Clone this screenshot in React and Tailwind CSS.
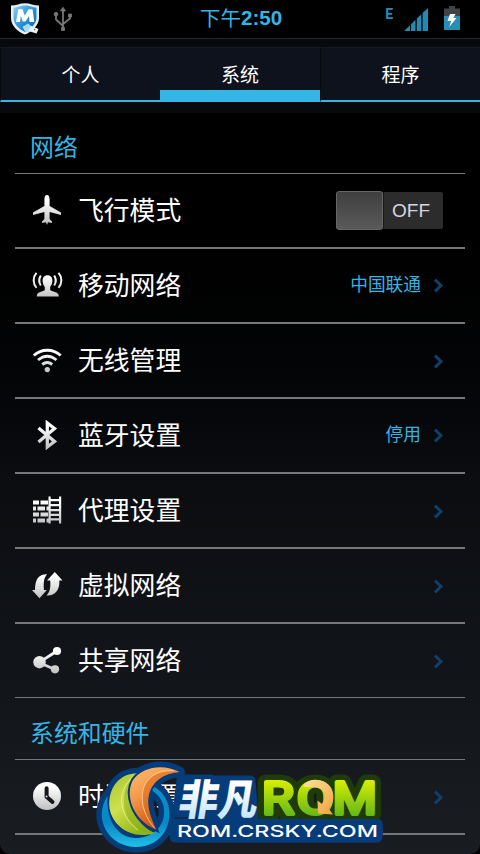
import React, { useState } from "react";

// ------------------- DATA -------------------
const tabs = ["个人", "系统", "程序"];

const networkItems = [
  { id: "airplane", label: "飞行模式", toggle: true },
  { id: "mobile", label: "移动网络", value: "中国联通" },
  { id: "wifi", label: "无线管理" },
  { id: "bluetooth", label: "蓝牙设置", value: "停用" },
  { id: "proxy", label: "代理设置" },
  { id: "vpn", label: "虚拟网络" },
  { id: "share", label: "共享网络" },
];

// ------------------- ROW ICONS -------------------
const shapes = {
  airplane: (
    <path d="M16 0C17.8 0 18.6 2 18.6 4.5V11L30 17.6V20L18.6 17V24L21 26.5V28L17 27.2L16 30L15 27.2L11 28V26.5L13.4 24V17L2 20V17.6L13.4 11V4.5C13.4 2 14.2 0 16 0Z" />
  ),
  mobile: (
    <>
      <path d="M16.5 5.3C19.8 5.3 21.4 7.6 21.4 10.6C21.4 13.6 20.2 15.8 19.2 17V20.2C22 21.6 27.8 22 27.8 26V26.6H5.8V26C5.8 22 11 21.6 13.8 20.2V17C12.8 15.8 11.6 13.6 11.6 10.6C11.6 7.6 13.2 5.3 16.5 5.3Z" />
      <path
        d="M9.8 5.5C7.9 8.5 7.9 12.5 9.8 15.5M5.5 2.8C1.7 7 1.7 13.5 5.5 17.8M23.2 5.5C25.1 8.5 25.1 12.5 23.2 15.5M27.5 2.8C31.3 7 31.3 13.5 27.5 17.8"
        fill="none"
        stroke="url(#silver)"
        strokeWidth="2"
      />
    </>
  ),
  wifi: (
    <>
      <path
        d="M2.8 10.5C10.5 3.5 22 3.5 29.7 10.5M7 15C13 10 19.5 10 25.5 15M11.2 19.5C14.5 17 18 17 21.2 19.5"
        fill="none"
        stroke="url(#silver)"
        strokeWidth="2.9"
      />
      <circle cx="16.3" cy="24.6" r="2.6" />
    </>
  ),
  bluetooth: (
    <path
      d="M7.5 8L23.5 21.5L16.3 27V3L23.5 8.5L7.5 22"
      fill="none"
      stroke="url(#silver)"
      strokeWidth="3.3"
    />
  ),
  proxy: (
    <path d="M2 5.5H8V9.5H2ZM9.5 5.5H17V9.5H9.5ZM2 11.5H5V15.5H2ZM6.5 11.5H14V15.5H6.5ZM15.5 11.5H18V15.5H15.5ZM2 17.5H8V21.5H2ZM9.5 17.5H17V21.5H9.5ZM2 23.5H5V27.5H2ZM6.5 23.5H14V27.5H6.5ZM15.5 23.5H18V27.5H15.5ZM17.5 1.5H19.7V4H28V1.5H30.2V28.5H28V25.5H19.7V28.5H17.5ZM19.7 6.3V9H28V6.3ZM19.7 11.3V14H28V11.3ZM19.7 16.3V18.7H28V16.3ZM19.7 21V23.3H28V21Z" />
  ),
  vpn: (
    <>
      <path d="M16 4.3C8 4 4 9 4 20H1L8.5 28.3L15.8 20H13C12.3 12 13 8 16 4.3Z" />
      <path d="M15.5 25.5C19 22 19.8 17 19.2 10.5H16L23.8 2L31.5 10.5H28.3C29 19.5 24.5 26 15.5 25.5Z" />
    </>
  ),
  share: (
    <>
      <path
        d="M26 6L8 17.5L24 24.5"
        fill="none"
        stroke="url(#silver)"
        strokeWidth="2.8"
      />
      <circle cx="26" cy="6" r="4.1" />
      <circle cx="8.5" cy="17.2" r="6.2" />
      <circle cx="24" cy="24.3" r="4.1" />
    </>
  ),
  clock: (
    <>
      <circle cx="16" cy="15" r="14" />
      <path
        d="M15.6 7.2V15.8L21.5 21"
        fill="none"
        stroke="#14171b"
        strokeWidth="4"
        strokeLinecap="round"
      />
      <circle cx="15.6" cy="15.5" r="1" fill="#ccc" />
    </>
  ),
};

const RowIcon = ({ name }) => (
  <svg className="-mt-[2px] h-[30px] w-8 shrink-0" viewBox="0 0 32 30" fill="url(#silver)">
    <defs>
      <linearGradient
        id="silver"
        gradientUnits="userSpaceOnUse"
        x1="0"
        y1="0"
        x2="0"
        y2="30"
      >
        <stop offset="0.2" stopColor="#fff" />
        <stop offset="1" stopColor="#bcbcbc" />
      </linearGradient>
    </defs>
    {shapes[name]}
  </svg>
);

const Chevron = () => (
  <svg className="mt-px ml-3 h-[15px] w-[11px]" viewBox="0 0 11 15">
    <path
      d="M2 1.6L8 7.5L2 13.4"
      fill="none"
      stroke="#103f68"
      strokeWidth="3"
    />
  </svg>
);

// ------------------- STATUS BAR -------------------
const StatusBar = () => (
  <header className="flex h-[39px] justify-between border-b border-[#24282d] bg-black">
    <div className="flex w-[160px] pl-[10px]">
      <svg className="h-9 w-[30px]" viewBox="0 0 30 36">
        <defs>
          <linearGradient id="shield" x1="0" y1="0" x2="1" y2="1">
            <stop stopColor="#8fd0ef" />
            <stop offset="0.45" stopColor="#2d9bdc" />
            <stop offset="1" stopColor="#075da8" />
          </linearGradient>
        </defs>
        <path
          d="M1 5.5C6 5.5 10 3.2 15 3.2S24 5.5 29 5.5V18C29 26 21 32 15 34.5C8 32 1 26 1 18Z"
          fill="#e8eef2"
        />
        <path
          d="M3.5 7.5C8 7.5 10 5.5 15 5.5S22 7.5 26.5 7.5V18C26.5 24 20 29 15 32C9 29 3.5 24 3.5 18Z"
          fill="url(#shield)"
        />
        <path
          d="M6 22L8.3 9.2H12.5L14.8 15.5L18.5 9.2H22.5L24.3 22H19.5L19 16L15.5 21.5H12.7L10.8 16L10 22Z"
          fill="#fff"
        />
        <path d="M12.5 27L18 23.5L23 27.5L19 32L15 31.5Z" fill="#a9dcf3" />
        <path d="M21 26L28.5 29L26.5 33.5L18.5 31Z" fill="#eef3f5" />
        <path d="M24 29H25.3V30.3H24Z" fill="#567184" />
      </svg>
      <svg
        className="mt-[6px] ml-[13px] h-[26px] w-5"
        viewBox="0 0 20 26"
        fill="#777"
        stroke="#777"
      >
        <path d="M10 24V3M10 20L3 13.5V8M10 18L17 12.5V9" fill="none" strokeWidth="1.8" />
        <path d="M10 1.2L12.5 5H7.5ZM8.5 21.5H11.5V24.5H8.5ZM15.5 8H18.5V11H15.5Z" strokeWidth="0.8" />
        <circle cx="3" cy="8.2" r="1.8" />
      </svg>
    </div>
    <div className="flex h-[37px] w-[162px] items-center justify-center text-[20.6px] leading-none font-bold text-[#33b5e5]">
      <span className="pt-px font-normal">下午</span>
      <span>2:50</span>
    </div>
    <div className="flex w-[158px] justify-end pr-5">
      <span className="mt-[7px] font-['Roboto',sans-serif] text-[14px] leading-[14px] font-bold text-[#238eb7]">
        E
      </span>
      <svg className="mt-2 ml-[11px] h-[23px] w-6" viewBox="0 0 24 23">
        <path
          d="M0 23L6 17.2V23ZM7 16.2L11.5 11.8V23H7ZM12.8 10.6L17.3 6.2V23H12.8ZM18.6 5L24 0V23H18.6Z"
          fill="#2489b2"
        />
      </svg>
      <svg className="mt-[6px] ml-4 h-6 w-4" viewBox="0 0 16 24">
        <path d="M5 0H11V2.5H16V24H0V2.5H5Z" fill="#3f4347" />
        <path d="M0 10H16V24H0Z" fill="#278eb4" />
        <path d="M6 8H11.5L9.3 12H12.5L5.2 21L7.3 15H3.5Z" fill="#fff" />
      </svg>
    </div>
  </header>
);

// ------------------- TABS -------------------
const TabBar = ({ active, onChange }) => (
  <div className="flex h-[74px] bg-[#07090d] pt-2 pb-[11px]">
    {tabs.map((tab, i) => (
      <button
        key={tab}
        onClick={() => onChange(i)}
        className={`flex h-[55px] w-40 items-center justify-center border-t border-t-[#181a1e] bg-[#0e121d] text-[19px] text-white ${
          active === i
            ? "border-b-[12px] border-b-[#33b5e5] pt-[15px]"
            : "border-b-2 border-l border-b-[#33b5e5] border-l-[#07090d] pt-[5px]"
        }`}
      >
        {tab}
      </button>
    ))}
  </div>
);

const SectionTitle = ({ children, className }) => (
  <h2
    className={`flex items-center border-b border-[#77777a] pl-[15px] text-[23.9px] leading-none text-[#33b5e5] ${className}`}
  >
    {children}
  </h2>
);

const SettingRow = ({ icon, label, value, toggle, className = "h-[75px] border-b-2" }) => (
  <li className={`flex items-center border-[#77777a] pr-[21px] pl-4 ${className}`}>
    <RowIcon name={icon} />
    <span className="ml-[15px] pt-[2px] text-[25.8px] leading-none whitespace-nowrap text-white">
      {label}
    </span>
    {toggle ? (
      <div className="mr-px ml-auto flex h-[37px] w-[107px] items-center rounded-[2px] bg-[#2c2c2d]">
        <div className="h-[39px] w-[47px] rounded-[3px] border border-[#666] bg-linear-to-b from-[#3f3f3f] to-[#5a5a5a]" />
        <div className="h-full w-px bg-[#171717]" />
        <span className="ml-[8px] pt-px text-[19px] text-[#d8d5e2]">OFF</span>
      </div>
    ) : (
      <div className="ml-auto flex items-center text-[17.7px] leading-none text-[#33b5e5]">
        {value}
        <Chevron />
      </div>
    )}
  </li>
);

// ------------------- SITE LOGO -------------------
const ringPath =
  "M107.5 796C92 820 110 847 136 847C161 847 174 825 168 804C165 795 159 789 153 786.5L151 790C160 795 165 804 164 814C163 829 150 838 136 838C118 838 106 821 107.5 796Z";
const leafPath =
  "M138.3 773.3C119 773 108.5 788 109.3 806C110.5 824 130 841 155 833C142 828 131 813 129 797C128 787 131.5 779 138.3 773.3Z";
const flamePath =
  "M179.5 772C163 763 142 767 133 780C125 794 132 820 156 829.5C151 818 146 806 149 794C152 782 163 773 179.5 772Z";

// letters are shared by the dark backing and the bright face
const RomLetters = () => (
  <>
    <text x="262" y="813.8" textLength="32" lengthAdjust="spacingAndGlyphs">R</text>
    <text x="296.8" y="813.8" textLength="37" lengthAdjust="spacingAndGlyphs">O</text>
    <text x="332.8" y="813.8" textLength="44" lengthAdjust="spacingAndGlyphs">M</text>
  </>
);

const SiteLogo = () => (
  <svg
    className="pointer-events-none absolute top-[755px] left-[90px] h-[99px] w-[300px]"
    viewBox="90 755 300 99"
  >
    <defs>
      <linearGradient id="leaf" x1="0" y1="0" x2="0.6" y2="1">
        <stop stopColor="#a5c52c" />
        <stop offset="0.5" stopColor="#cfe04e" />
        <stop offset="1" stopColor="#8fb516" />
      </linearGradient>
      <linearGradient id="flame" x1="0" y1="0" x2="0.5" y2="1">
        <stop stopColor="#ffbd6e" />
        <stop offset="0.45" stopColor="#f4994b" />
        <stop offset="1" stopColor="#cb4c0c" />
      </linearGradient>
      <linearGradient id="ring" x1="0" y1="0" x2="0" y2="1">
        <stop stopColor="#0791cf" />
        <stop offset="0.6" stopColor="#0a86c6" />
        <stop offset="1" stopColor="#1fc0e6" />
      </linearGradient>
      <linearGradient id="ice" x1="0" y1="0" x2="0" y2="1">
        <stop offset="0.3" stopColor="#fff" />
        <stop offset="1" stopColor="#b6dff7" />
      </linearGradient>
      <linearGradient id="lime" gradientUnits="userSpaceOnUse" x1="0" y1="780" x2="0" y2="817">
        <stop stopColor="#d9ef00" />
        <stop offset="1" stopColor="#5fb51c" />
      </linearGradient>
      <linearGradient id="amber" x1="0" y1="0" x2="1" y2="1">
        <stop stopColor="#ffe3a0" />
        <stop offset="1" stopColor="#f2a13a" />
      </linearGradient>
    </defs>

    {/* dark backings */}
    <g fill="#063c79" stroke="#063c79" strokeWidth="11" strokeLinejoin="round">
      <path d={ringPath} />
      <path d={leafPath} />
      <path d={flamePath} />
      <path d="M128 776C114 779 106 790 105 802L118 832L136 842L153 833L140 790Z" stroke="none" />
      <path d="M182 780H211V812H178ZM211 781H250L253 816H206Z" />
      <path d="M175 824H377V837H175Z" />
    </g>
    <g
      fontFamily="Roboto, sans-serif"
      fontSize="45"
      fill="#1e3b08"
      stroke="#1e3b08"
      strokeWidth="15"
      strokeLinejoin="round"
    >
      <RomLetters />
    </g>
    <path
      d="M171 819H373Q383 819 383 829V834Q382 842.5 373 842.5H178Q170 842 170 834Z"
      fill="#063c79"
    />

    {/* round emblem */}
    <path d={ringPath} fill="url(#ring)" />
    <path d={leafPath} fill="url(#leaf)" />
    <path
      d="M134 776C122 788 119 812 135 827C140 831 147 833 155 833C142 828 131 813 129 797C128 787 130 781 134 776Z"
      fill="#88ac19"
      opacity="0.5"
    />
    <path
      d="M133 777C117 790 117 814 138 830"
      fill="none"
      stroke="#e7f39a"
      strokeWidth="0.8"
    />
    <path d={flamePath} fill="#063c79" stroke="#063c79" strokeWidth="4" />
    <path d={flamePath} fill="url(#flame)" />
    <path
      d="M179.5 772C160 768 146 778 143 790C140 804 146 819 156 829.5C151 818 146 806 149 794C152 782 163 773 179.5 772Z"
      fill="#d9661a"
      opacity="0.55"
    />
    <path
      d="M174 771C157 769 146 778 143 790C140 804 146 819 155 828.5"
      fill="none"
      stroke="#ffd4a0"
      strokeWidth="0.8"
    />

    {/* wordmarks */}
    <text
      transform="translate(177 815) skewX(-9)"
      fontFamily="'Noto Sans CJK SC', sans-serif"
      fontSize="42"
      fontWeight="900"
      textLength="79"
      lengthAdjust="spacingAndGlyphs"
      fill="url(#ice)"
    >
      非凡
    </text>
    <g
      fontFamily="Roboto, sans-serif"
      fontSize="45"
      fill="url(#lime)"
      stroke="url(#lime)"
      strokeWidth="4"
      strokeLinejoin="round"
    >
      <RomLetters />
    </g>
    <path
      d="M303 786C307 781 311 779.8 316 779.8C327 780 334 788 333.4 798C333 803 331 806 329 809L333 814.5L318 813.5L317.5 800.5L322 804C327 797 325 788 315.5 787.3C311 787 307 788 303 786Z"
      fill="url(#amber)"
    />
    <text
      x="177"
      y="836.8"
      fontFamily="Inter, Roboto, sans-serif"
      fontSize="16"
      fontWeight="500"
      fill="#fff"
      textLength="201"
      lengthAdjust="spacingAndGlyphs"
    >
      ROM.CRSKY.COM
    </text>
  </svg>
);

// ------------------- MAIN -------------------
const App = () => {
  const [activeTab, setActiveTab] = useState(1);

  return (
    <div className="relative h-[854px] w-[480px] overflow-hidden bg-black font-['Liberation_Sans','Noto_Sans_CJK_SC',sans-serif]">
      <StatusBar />
      <TabBar active={activeTab} onChange={setActiveTab} />

      <main className="h-[741px] rounded-b-[10px] bg-linear-to-b from-black via-[#0b0d11] to-[#191c21] px-[15px]">
        <SectionTitle className="h-[61px] pt-[10px]">网络</SectionTitle>
        <ul>
          {networkItems.map((item, i) => (
            <SettingRow
              key={item.id}
              icon={item.id}
              label={item.label}
              value={item.value}
              toggle={item.toggle}
              className={
                i === networkItems.length - 1
                  ? "h-[74px] border-b"
                  : "h-[75px] border-b-2"
              }
            />
          ))}
        </ul>
        <SectionTitle className="h-[62px] pt-[11px]">系统和硬件</SectionTitle>
        <ul>
          <SettingRow icon="clock" label="时间设置" />
        </ul>
      </main>

      <SiteLogo />
    </div>
  );
};

export default App;
